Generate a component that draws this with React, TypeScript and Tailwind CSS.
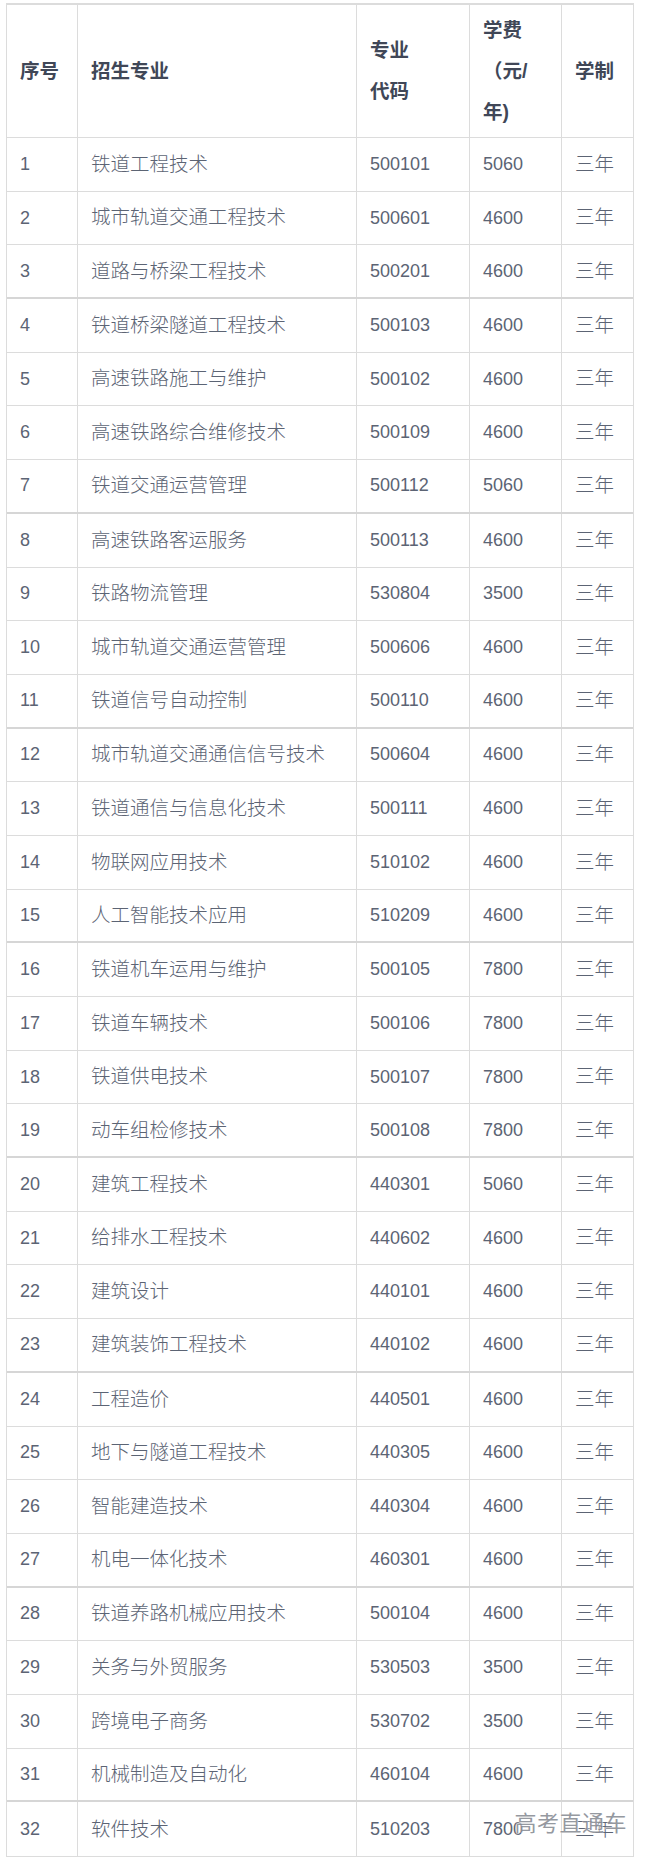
import React from 'react';

type Major = { no: number; name: string; code: string; fee: string };

const majors: Major[] = [
  { no: 1, name: '铁道工程技术', code: '500101', fee: '5060' },
  { no: 2, name: '城市轨道交通工程技术', code: '500601', fee: '4600' },
  { no: 3, name: '道路与桥梁工程技术', code: '500201', fee: '4600' },
  { no: 4, name: '铁道桥梁隧道工程技术', code: '500103', fee: '4600' },
  { no: 5, name: '高速铁路施工与维护', code: '500102', fee: '4600' },
  { no: 6, name: '高速铁路综合维修技术', code: '500109', fee: '4600' },
  { no: 7, name: '铁道交通运营管理', code: '500112', fee: '5060' },
  { no: 8, name: '高速铁路客运服务', code: '500113', fee: '4600' },
  { no: 9, name: '铁路物流管理', code: '530804', fee: '3500' },
  { no: 10, name: '城市轨道交通运营管理', code: '500606', fee: '4600' },
  { no: 11, name: '铁道信号自动控制', code: '500110', fee: '4600' },
  { no: 12, name: '城市轨道交通通信信号技术', code: '500604', fee: '4600' },
  { no: 13, name: '铁道通信与信息化技术', code: '500111', fee: '4600' },
  { no: 14, name: '物联网应用技术', code: '510102', fee: '4600' },
  { no: 15, name: '人工智能技术应用', code: '510209', fee: '4600' },
  { no: 16, name: '铁道机车运用与维护', code: '500105', fee: '7800' },
  { no: 17, name: '铁道车辆技术', code: '500106', fee: '7800' },
  { no: 18, name: '铁道供电技术', code: '500107', fee: '7800' },
  { no: 19, name: '动车组检修技术', code: '500108', fee: '7800' },
  { no: 20, name: '建筑工程技术', code: '440301', fee: '5060' },
  { no: 21, name: '给排水工程技术', code: '440602', fee: '4600' },
  { no: 22, name: '建筑设计', code: '440101', fee: '4600' },
  { no: 23, name: '建筑装饰工程技术', code: '440102', fee: '4600' },
  { no: 24, name: '工程造价', code: '440501', fee: '4600' },
  { no: 25, name: '地下与隧道工程技术', code: '440305', fee: '4600' },
  { no: 26, name: '智能建造技术', code: '440304', fee: '4600' },
  { no: 27, name: '机电一体化技术', code: '460301', fee: '4600' },
  { no: 28, name: '铁道养路机械应用技术', code: '500104', fee: '4600' },
  { no: 29, name: '关务与外贸服务', code: '530503', fee: '3500' },
  { no: 30, name: '跨境电子商务', code: '530702', fee: '3500' },
  { no: 31, name: '机械制造及自动化', code: '460104', fee: '4600' },
  { no: 32, name: '软件技术', code: '510203', fee: '7800' },
];

const cols = 'grid grid-cols-[71px_279px_113px_92px_71px]';
const cell = 'flex items-center pl-[13px] border-r border-[#dcdcdc]';

export default function App() {
  return (
    <div
      className="bg-white w-[654px] min-h-[1861px] pl-[6px] pt-[3px]"
      style={{ fontFamily: '"Liberation Sans", "Noto Sans CJK SC", sans-serif' }}
    >
      <div className="relative w-[628px] border-t-2 border-x border-b border-[#dcdcdc]">
        {/* Header */}
        <div className={`${cols} h-[133px] border-b border-[#dcdcdc] font-bold text-[19.5px] text-[#404757] leading-[41px]`}>
          <div className={cell}>序号</div>
          <div className={cell}>招生专业</div>
          <div className={cell}>
            <span>
              专业
              <br />
              代码
            </span>
          </div>
          <div className={cell}>
            <span>
              学费
              <br />
              （元/
              <br />
              年)
            </span>
          </div>
          <div className="flex items-center pl-[13px]">学制</div>
        </div>

        {/* Rows - a heavier rule shows after rows 3, 7, 11 ... */}
        {majors.map((m, i) => {
          const last = i === majors.length - 1;
          const thick = i % 4 === 2;
          return (
            <div
              key={m.no}
              className={`${cols} h-[53.7px] text-[#5c6474] ${
                last ? '' : thick ? 'border-b-2 border-[#d6d6d6]' : 'border-b border-[#dcdcdc]'
              }`}
            >
              <div className={`${cell} text-[18px]`}>{m.no}</div>
              <div className={`${cell} text-[19.5px] font-light`}>{m.name}</div>
              <div className={`${cell} text-[18px]`}>{m.code}</div>
              <div className={`${cell} text-[18px]`}>{m.fee}</div>
              <div className="flex items-center pl-[13px] text-[19.5px] font-light">三年</div>
            </div>
          );
        })}

        {/* watermark */}
        <div
          className="absolute right-[6px] bottom-[21px] text-[22px] leading-none text-[#8a8e96] opacity-90 tracking-[0.5px]"
          style={{ textShadow: '0 0 2px #fff, 0 0 1px #fff' }}
        >
          高考直通车
        </div>
      </div>
    </div>
  );
}
